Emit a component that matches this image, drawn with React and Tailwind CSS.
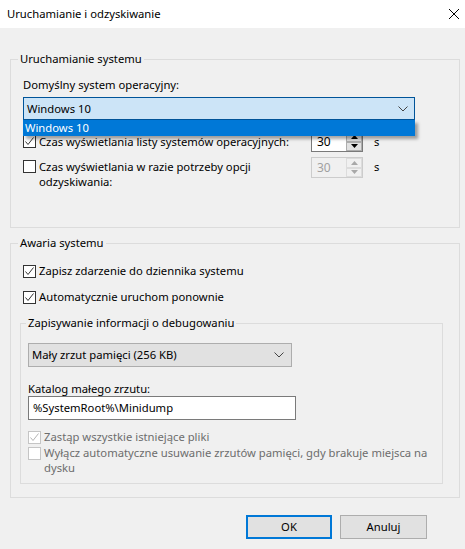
import React from 'react';

const font = { fontFamily: '"Noto Sans", "Open Sans", sans-serif' };

function CheckBox({ checked, disabled }) {
  return (
    <span
      className={`flex h-[13px] w-[13px] shrink-0 items-center justify-center border bg-white ${
        disabled ? 'border-[#c5c5c5]' : 'border-[#333333]'
      }`}
    >
      {checked && (
        <svg width="11" height="11" viewBox="0 0 11 11">
          <polyline
            points="1.5,5.5 4,8.5 9.5,1.5"
            fill="none"
            stroke={disabled ? '#b5b5b5' : '#333333'}
            strokeWidth="1"
          />
        </svg>
      )}
    </span>
  );
}

function Chevron() {
  return (
    <svg width="10" height="6" viewBox="0 0 10 6">
      <polyline points="0.5,0.5 5,5 9.5,0.5" fill="none" stroke="#444" strokeWidth="1" />
    </svg>
  );
}

function Arrow({ up, color }) {
  return (
    <svg width="7" height="4" viewBox="0 0 7 4">
      {up ? <polygon points="0,4 7,4 3.5,0" fill={color} /> : <polygon points="0,0 7,0 3.5,4" fill={color} />}
    </svg>
  );
}

function SpinBox({ value, disabled }) {
  return (
    <div
      className={`flex h-[21px] w-[52px] shrink-0 border ${
        disabled ? 'border-[#cccccc] bg-[#f0f0f0] text-[#a0a0a0]' : 'border-[#7a7a7a] bg-white text-black'
      }`}
    >
      <span className="flex-1 pl-[5px] text-[12px] leading-[19px]">{value}</span>
      <div className="flex w-[16px] flex-col">
        <div
          className={`flex flex-1 items-center justify-center border ${
            disabled ? 'border-[#dcdcdc]' : 'border-[#adadad] bg-[#e1e1e1]'
          }`}
        >
          <Arrow up color={disabled ? '#a8a8a8' : '#000'} />
        </div>
        <div
          className={`flex flex-1 items-center justify-center border ${
            disabled ? 'border-[#dcdcdc]' : 'border-[#adadad] bg-[#e1e1e1]'
          }`}
        >
          <Arrow color={disabled ? '#a8a8a8' : '#000'} />
        </div>
      </div>
    </div>
  );
}

function Group({ title, className, legendClass, children }) {
  return (
    <fieldset className={`border border-[#dcdcdc] ${className}`}>
      <legend className={`px-[2px] leading-4 ${legendClass}`}>{title}</legend>
      {children}
    </fieldset>
  );
}

export default function App() {
  return (
    <div
      className="h-[549px] w-[465px] overflow-hidden whitespace-nowrap bg-[#f0f0f0] text-[11.25px] leading-4 text-black"
      style={font}
    >
      {/* title bar */}
      <div className="flex h-[28px] items-center justify-between bg-white pl-[7px] pr-[4px]">
        <span>Uruchamianie i odzyskiwanie</span>
        <svg width="12" height="12" viewBox="0 0 12 12" className="mr-[1px]">
          <path d="M1 1 L11 11 M11 1 L1 11" stroke="#000" strokeWidth="1" />
        </svg>
      </div>

      <div className="pt-[23px]">
        <Group
          title="Uruchamianie systemu"
          className="ml-[10px] w-[450px] pb-[38px] pl-[12px] pr-[12px] pt-[10px]"
          legendClass="ml-[-5px]"
        >
          <div>Domyślny system operacyjny:</div>
          <div className="relative z-10 mt-[4px] w-[392px]">
            <div className="flex h-[23px] items-center justify-between border border-[#005499] bg-[#cce4f7] pl-[3px] pr-[6px]">
              <span>Windows 10</span>
              <Chevron />
            </div>
            <div className="absolute left-0 top-full h-[16px] w-full bg-[#0078d7] pl-[2px] leading-[16px] text-white shadow-[3px_3px_3px_rgba(0,0,0,0.35)]">
              Windows 10
            </div>
          </div>

          <div className="mt-[11px] flex h-[21px] items-center">
            <div className="flex w-[288px] items-center gap-[3px]">
              <CheckBox checked />
              <span>Czas wyświetlania listy systemów operacyjnych:</span>
            </div>
            <SpinBox value="30" />
            <span className="ml-[11px]">s</span>
          </div>

          <div className="mt-[5px] flex items-start">
            <div className="mt-[2px] flex w-[288px] items-start gap-[3px]">
              <span className="mt-[1px]">
                <CheckBox />
              </span>
              <span className="leading-[15px]">
                Czas wyświetlania w razie potrzeby opcji
                <br />
                odzyskiwania:
              </span>
            </div>
            <SpinBox value="30" disabled />
            <span className="ml-[11px] mt-[2px]">s</span>
          </div>
        </Group>

        <Group
          title="Awaria systemu"
          className="ml-[10px] mt-[7px] w-[450px] pb-[13px] pl-[9px] pr-[16px] pt-[12px]"
          legendClass="ml-[-2px]"
        >
          <div className="ml-[3px] flex items-center gap-[3px]">
            <CheckBox checked />
            <span>Zapisz zdarzenie do dziennika systemu</span>
          </div>
          <div className="ml-[3px] mt-[10px] flex items-center gap-[3px]">
            <CheckBox checked />
            <span>Automatycznie uruchom ponownie</span>
          </div>

          <Group
            title="Zapisywanie informacji o debugowaniu"
            className="mt-[10px] w-[423px] pb-[8px] pl-[7px] pt-[12px]"
            legendClass="ml-[-2px]"
          >
            <div className="flex h-[24px] w-[264px] items-center justify-between border border-[#adadad] bg-[#e1e1e1] pl-[3px] pr-[7px]">
              <span>Mały zrzut pamięci (256 KB)</span>
              <Chevron />
            </div>
            <div className="mt-[15px] leading-[14px]">Katalog małego zrzutu:</div>
            <div className="flex h-[24px] w-[268px] items-center border border-[#7a7a7a] bg-white pl-[4px]">
              %SystemRoot%\Minidump
            </div>
            <div className="mt-[9px] flex items-center gap-[3px] text-[#6d6d6d]">
              <CheckBox checked disabled />
              <span>Zastąp wszystkie istniejące pliki</span>
            </div>
            <div className="flex items-start gap-[3px] text-[#6d6d6d]">
              <span className="mt-[2px]">
                <CheckBox disabled />
              </span>
              <span className="leading-[15px]">
                Wyłącz automatyczne usuwanie zrzutów pamięci, gdy brakuje miejsca na
                <br />
                dysku
              </span>
            </div>
          </Group>
        </Group>

        <div className="mt-[17px] flex gap-[8px] pl-[246px]">
          <button className="h-[24px] w-[86px] border-2 border-[#0078d7] bg-[#e1e1e1]">OK</button>
          <button className="h-[24px] w-[87px] border border-[#adadad] bg-[#e1e1e1]">Anuluj</button>
        </div>
      </div>
    </div>
  );
}
